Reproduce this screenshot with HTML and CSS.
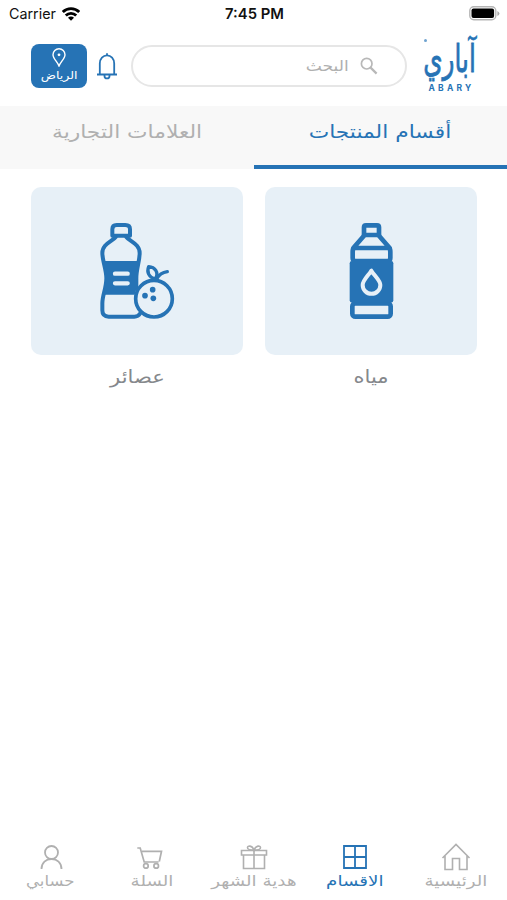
FILE: index.html
```
<!DOCTYPE html>
<html lang="ar" dir="rtl">

<head>
    <meta charset="UTF-8">
    <title>Abary</title>
    <link rel="stylesheet" href="styles.css">
</head>

<body>
    <div class="status-bar" dir="ltr">
        <div class="carrier">
            <span>Carrier</span>
            <svg width="18" height="14" viewBox="0 0 18 14" fill="none" stroke="#000" stroke-width="2.8">
                <path d="M.8 5a11.5 11.5 0 0 1 16.400 0" />
                <path d="M3.800 8.500a7.200 7.200 0 0 1 10.400 0" />
                <path d="M6 10.800a4 4 0 0 1 6 0L9 13.800z" fill="#000" stroke="none" />
            </svg>
        </div>
        <div class="time">7:45 PM</div>
        <svg class="battery" width="31" height="15" viewBox="0 0 31 15">
            <rect x=".8" y=".8" width="26" height="13" rx="4" fill="#fff" stroke="#b5b5b5" stroke-width="1.4" />
            <rect x="2.5" y="2.5" width="22.6" height="9.6" rx="2" />
            <path d="M28.4 5v5q2-1 2-2.500t-2-2.500z" fill="#aaa" />
        </svg>
    </div>

    <div class="header">
        <div class="logo">
            <span class="logo-dot"></span>
            <span class="logo-ar">آباري</span>
            <span class="logo-en">ABARY</span>
        </div>
        <div class="search">
            <svg width="18" height="18" viewBox="0 0 18 18" fill="none" stroke="#b8b8b8" stroke-width="1.700">
                <circle cx="6.700" cy="6.700" r="5.300" />
                <path d="M10.600 10.600l6 6" stroke-width="2.200" />
            </svg>
            <span>البحث</span>
        </div>
        <svg class="bell" width="22" height="28" viewBox="0 0 22 28" fill="none" stroke="#2673b5" stroke-width="1.800">
            <path d="M1 22.500h20M3.800 22.500V11.500C3.800 6.500 7 3.300 11 3.300s7.200 3.200 7.200 8.200v11M11 3.300V1.200" />
            <path d="M8.500 22.700v1.200a2.500 2.500 0 0 0 5 0v-1.200" />
        </svg>
        <div class="city">
            <svg width="14" height="19" viewBox="0 0 14 19" fill="none" stroke="#fff" stroke-width="1.400">
                <path d="M7 18C5.500 14 1 10.500 1 6.700a6 6 0 0 1 12 0C13 10.500 8.500 14 7 18z" />
                <circle cx="7" cy="6.800" r="1.400" fill="#fff" stroke="none" />
            </svg>
            <span>الرياض</span>
        </div>
    </div>

    <div class="tabs">
        <div class="tab active"><span>أقسام المنتجات</span></div>
        <div class="tab"><span>العلامات التجارية</span></div>
    </div>

    <div class="categories">
        <div class="category">
            <div class="card">
                <svg width="45" height="98.300" viewBox="280 125 135 295">
                    <g fill="none" stroke="#2673b5" stroke-width="14" stroke-linejoin="round">
                        <path d="M325 164v-23q0-6 6-6h33q6 0 6 6v23z" />
                        <path d="M325 166l-32 37h109l-32-37" />
                        <path d="M293 203q-2 6-2 12v18q0 9 8 9h97q8 0 8-9v-18q0-6-2-12" />
                        <rect x="290" y="369" width="115" height="40" rx="9" />
                    </g>
                    <rect x="282" y="242" width="131" height="125" rx="7" fill="#2673b5" />
                    <path d="M347 271c-8 14-26 29-26 43a26 26 0 0 0 53 0c0-14-19-29-27-43z" fill="#2673b5" stroke="#e7f0f7" stroke-width="12" stroke-linejoin="round" />
                </svg>
            </div>
            <p><span>مياه</span></p>
        </div>
        <div class="category">
            <div class="card">
                <svg width="75" height="98.300" viewBox="240 125 225 295">
                    <g fill="none" stroke="#2673b5" stroke-width="12" stroke-linecap="round" stroke-linejoin="round">
                        <path d="M277 166v-19q0-13 13-13h26q14 0 14 13v19z" />
                        <path d="M287 170c-10 14-40 20-40 48 0 24 12 48 12 76 0 30-12 50-12 75v21q0 19 19 19h77q12 0 17-9M319 170c10 14 40 20 40 48 0 24-10 48-10 76v28" />
                    </g>
                    <path d="M249 242h107c-3 20-6 32-5 50l2 30q-8 10-9 21h-95c5-18 7-32 7-50s-4-34-7-51z" fill="#2673b5" />
                    <path d="M285 280h38M285 309h38" stroke="#e7f0f7" stroke-width="13" stroke-linecap="round" />
                    <g fill="none" stroke="#2673b5" stroke-width="11" stroke-linecap="round" stroke-linejoin="round">
                        <circle cx="402" cy="355" r="55" fill="#e7f0f7" />
                        <path d="M407 295c-22-3-27-21-21-36 19 1 31 17 21 36zM410 296c7-13 17-20 32-22" stroke-width="10" />
                    </g>
                    <g fill="#2673b5">
                        <circle cx="398" cy="328" r="8.500" />
                        <circle cx="375" cy="346" r="8.500" />
                        <circle cx="400" cy="354" r="8.500" />
                    </g>
                </svg>
            </div>
            <p><span>عصائر</span></p>
        </div>
    </div>

    <div class="bottom-nav">
        <div class="nav-item">
            <svg width="30" height="28" viewBox="0 0 30 28" fill="none" stroke="#b0b0b0" stroke-width="1.600">
                <path d="M1.500 15L15 1.500 28.500 15M4 13v13.500h7.500V15.500h7v11H26V13" />
            </svg>
            <span>الرئيسية</span>
        </div>
        <div class="nav-item active">
            <svg width="30" height="28" viewBox="0 0 30 28" fill="none" stroke="#2673b5" stroke-width="1.800">
                <path d="M4 3h22v22H4zM15 3v22M4 14h22" />
            </svg>
            <span>الاقسام</span>
        </div>
        <div class="nav-item">
            <svg width="30" height="28" viewBox="0 0 30 28" fill="none" stroke="#b0b0b0" stroke-width="1.600">
                <path d="M2.500 7.500h25v4.500h-25zM4.500 12v13.500h21V12M15 7.500v18" />
                <path d="M15 7C12 7 8.500 6.800 8.500 4.700 8.500 2.500 13 2 15 7c2-5 6.500-4.500 6.500-2.300C21.500 6.800 18 7 15 7z" />
            </svg>
            <span>هدية الشهر</span>
        </div>
        <div class="nav-item">
            <svg width="30" height="28" viewBox="0 0 30 28" fill="none" stroke="#b0b0b0" stroke-width="1.700">
                <path d="M.3 5H3.200L7.200 19H21.500M5 8.300H24.500L22.300 18.500" />
                <circle cx="8.900" cy="22.900" r="2.300" />
                <circle cx="19.200" cy="22.900" r="2.300" />
            </svg>
            <span>السلة</span>
        </div>
        <div class="nav-item">
            <svg width="30" height="28" viewBox="0 0 30 28" fill="none" stroke="#b0b0b0" stroke-width="1.800">
                <circle cx="15.500" cy="9.500" r="6.500" />
                <path d="M5.500 26c0-6.500 4.500-10 10-10s10 3.500 10 10" />
            </svg>
            <span>حسابي</span>
        </div>
    </div>
</body>

</html>
```

FILE: styles.css
```
* {
    box-sizing: border-box;
}

body {
    display: flex;
    flex-direction: column;
    height: 900px;
    margin: 0;
    overflow: hidden;
    background-color: #fff;
    font-family: "DejaVu Sans", sans-serif;
    color: #b0b0b0;
}

svg {
    display: block;
    flex: none;
}

.status-bar {
    display: grid;
    grid-template-columns: 1fr auto 1fr;
    align-items: center;
    height: 28px;
    padding: 0 7px 1px 9px;
    font-family: Inter, sans-serif;
    font-size: 14.3px;
    color: #111;
}

.carrier {
    display: flex;
    align-items: center;
    gap: 6px;
}

.time {
    font-size: 14.8px;
    font-weight: 600;
}

.battery {
    justify-self: end;
}

.header {
    display: flex;
    align-items: center;
    height: 78px;
    padding: 0 31px 3px;
}

.logo {
    position: relative;
    display: flex;
    flex-direction: column;
    align-items: center;
    width: 52px;
    height: 58px;
    color: #2673b5;
}

.logo-ar {
    height: 47px;
    font-size: 24px;
    line-height: 45px;
    white-space: nowrap;
    -webkit-text-stroke: 0.5px #2673b5;
    transform: scale(1.03, 1.6);
}

.logo-dot {
    position: absolute;
    top: 2px;
    left: 0;
    width: 3px;
    height: 3px;
    border-radius: 50%;
    background-color: #6fa3d0;
}

.logo-en {
    direction: ltr;
    font-family: Inter, sans-serif;
    font-size: 8.5px;
    font-weight: 700;
    line-height: 13px;
    letter-spacing: 3.2px;
    margin-right: -3px;
}

.search {
    display: flex;
    align-items: center;
    gap: 11px;
    width: 276px;
    height: 42px;
    margin-right: 17px;
    padding-right: 27px;
    border: 2px solid #e6e6e6;
    border-radius: 21px;
    font-size: 15px;
}

.search span {
    transform: scaleX(1.14);
    transform-origin: right;
}

.bell {
    margin-right: 13px;
}

.city {
    display: flex;
    flex-direction: column;
    align-items: center;
    width: 56px;
    height: 44px;
    margin-right: auto;
    padding-top: 4px;
    border-radius: 8px;
    background-color: #2673b5;
    color: #fff;
    font-size: 11px;
    line-height: 18px;
}

.city span {
    transform: scaleX(1.14);
}

.tabs {
    display: flex;
    height: 63px;
    background-color: #f8f8f8;
}

.tab {
    flex: 1;
    border-bottom: 4px solid transparent;
    font-size: 18px;
    line-height: 52px;
    text-align: center;
}

.tab span {
    display: inline-block;
    transform: scaleX(1.21);
}

.tab.active {
    border-color: #2673b5;
    color: #2673b5;
}

.categories {
    display: grid;
    grid-template-columns: 1fr 1fr;
    gap: 22px;
    padding: 18px 30px 0 31px;
}

.card {
    display: flex;
    align-items: center;
    justify-content: center;
    height: 168px;
    border-radius: 10px;
    background-color: #e7f0f7;
}

.category p {
    margin: 6px 0 0;
    font-size: 18px;
    line-height: 32px;
    text-align: center;
    color: #85888c;
}

.category p span {
    display: inline-block;
    transform: scaleX(1.17);
}

.bottom-nav {
    display: grid;
    grid-template-columns: repeat(5, 1fr);
    height: 57px;
    margin-top: auto;
}

.nav-item {
    display: flex;
    flex-direction: column;
    align-items: center;
    font-size: 14.5px;
    line-height: 20px;
    white-space: nowrap;
}

.nav-item span {
    transform: scaleX(1.26);
}

.nav-item:last-child span {
    transform: scaleX(1.14);
}

.nav-item.active {
    color: #2673b5;
}
```
